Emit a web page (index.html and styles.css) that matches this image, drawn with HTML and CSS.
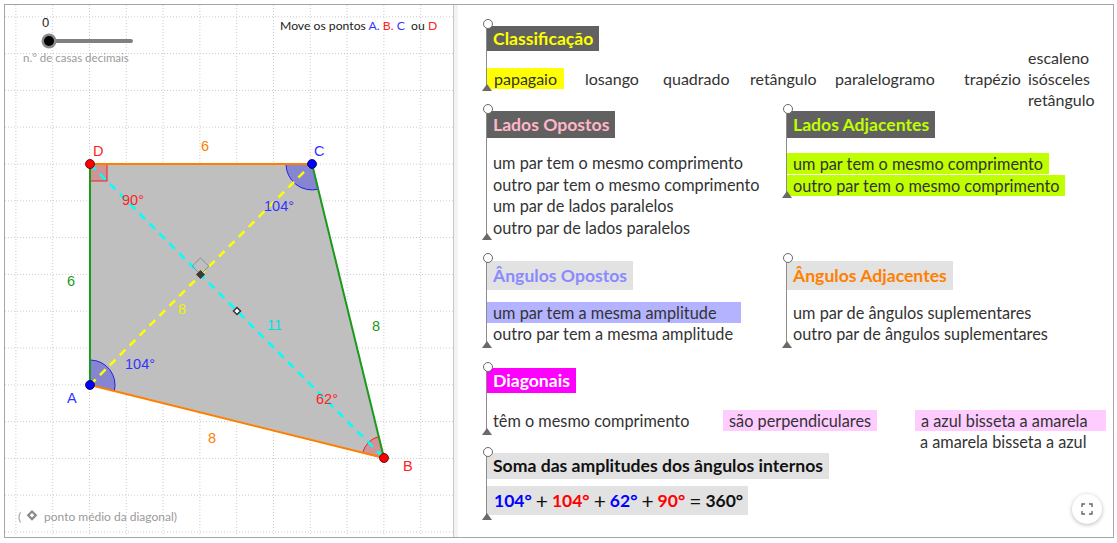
FILE: index.html
```html
<!DOCTYPE html>
<html lang="pt">
<head>
<meta charset="utf-8">
<title>Quadriláteros</title>
<link rel="stylesheet" href="styles.css">
</head>
<body>
<div class="app">
  <div class="graphics">
    <svg class="canvas" width="448" height="531" viewBox="5 5 448 531" xmlns="http://www.w3.org/2000/svg">
      <path class="grid" d="M15.9 5V536M52.7 5V536M89.5 5V536M126.3 5V536M163.1 5V536M199.9 5V536M236.7 5V536M273.5 5V536M310.3 5V536M347.1 5V536M383.9 5V536M420.7 5V536M5 16.8H453M5 53.6H453M5 90.4H453M5 127.2H453M5 164H453M5 200.8H453M5 237.6H453M5 274.4H453M5 311.2H453M5 348H453M5 384.8H453M5 421.6H453M5 458.4H453M5 495.2H453M5 532H453"/>

      <!-- slider -->
      <text class="slider-val" x="42" y="27">0</text>
      <line class="slider-track" x1="49" y1="41" x2="131" y2="41"/>
      <circle class="slider-halo" cx="49" cy="41" r="7.5"/>
      <circle class="slider-knob" cx="49" cy="41" r="5"/>
      <text class="hint hint-s" x="23" y="62">n.° de casas decimais</text>

      <text class="move" x="280" y="30" xml:space="preserve">Move os pontos <tspan class="c-blue">A.</tspan> <tspan class="c-red">B.</tspan> <tspan class="c-blue">C</tspan>  ou <tspan class="c-red">D</tspan></text>

      <!-- polygon -->
      <path class="poly" d="M90 164L312 164L384 458L90 385Z"/>

      <!-- angle marks -->
      <rect class="ang-red" x="90" y="164" width="17" height="17"/>
      <path class="ang-blue" d="M312 164L286 164A26 26 0 0 0 318.2 189.2Z"/>
      <path class="ang-blue" d="M90 385L90 360A25 25 0 0 1 114.3 391Z"/>
      <path class="ang-red" d="M384 458L362.7 452.7A22 22 0 0 1 378.8 436.6Z"/>

      <!-- sides -->
      <line class="side-orange" x1="90" y1="164" x2="312" y2="164"/>
      <line class="side-green" x1="312" y1="164" x2="384" y2="458"/>
      <line class="side-orange" x1="384" y1="458" x2="90" y2="385"/>
      <line class="side-green" x1="90" y1="385" x2="90" y2="164"/>

      <!-- diagonals -->
      <line class="diag-cyan" x1="90" y1="164" x2="384" y2="458"/>
      <line class="diag-yellow" x1="90" y1="385" x2="312" y2="164"/>

      <!-- markers -->
      <path class="right-mark" d="M200.5 274.5L192.2 266.2L200.5 257.9L208.8 266.2Z"/>
      <path class="inter" d="M200.5 270L205 274.5L200.5 279L196 274.5Z"/>
      <path class="mid" d="M237 307.5L240.5 311L237 314.5L233.5 311Z"/>

      <!-- points -->
      <circle class="pt-red" cx="90" cy="164" r="4.5"/>
      <circle class="pt-blue" cx="312" cy="164" r="4.5"/>
      <circle class="pt-red" cx="384" cy="458" r="4.5"/>
      <circle class="pt-blue" cx="90" cy="385" r="4.5"/>

      <!-- labels -->
      <text class="lbl c-red" x="93" y="156">D</text>
      <text class="lbl c-blue" x="314" y="156">C</text>
      <text class="lbl c-red" x="403" y="471">B</text>
      <text class="lbl c-blue" x="67" y="403">A</text>

      <text class="lbl c-orange" x="201" y="151">6</text>
      <text class="lbl c-green" x="67" y="286">6</text>
      <text class="lbl c-green" x="372" y="331">8</text>
      <text class="lbl c-orange" x="208" y="443">8</text>
      <text class="lbl c-yellow" x="178" y="314">8</text>
      <text class="lbl c-cyan" x="267" y="330">11</text>

      <text class="lbl c-red" x="122" y="205">90°</text>
      <text class="lbl c-blue" x="264" y="211">104°</text>
      <text class="lbl c-blue" x="125" y="369">104°</text>
      <text class="lbl c-red" x="316" y="404">62°</text>

      <text class="hint" x="18" y="521">(</text>
      <path class="hint-diamond" d="M32 511.5L35.8 515.3L32 519.1L28.2 515.3Z"/>
      <text class="hint" x="44" y="521">ponto médio da diagonal)</text>
    </svg>
  </div>
  <div class="divider"></div>
  <div class="panel">
    <section class="group g1">
      <div class="head dark t-yellow">Classificação</div>
      <div class="class-row">
        <span class="hl hl-yellow">papagaio</span>
        <span>losango</span>
        <span>quadrado</span>
        <span>retângulo</span>
        <span>paralelogramo</span>
        <span>trapézio</span>
        <span class="stack"><span>escaleno</span><span>isósceles</span><span>retângulo</span></span>
      </div>
    </section>

    <div class="pair pair1">
      <section class="group g2">
        <div class="head dark t-pink">Lados Opostos</div>
        <div class="lines">
          <div>um par tem o mesmo comprimento</div>
          <div>outro par tem o mesmo comprimento</div>
          <div>um par de lados paralelos</div>
          <div>outro par de lados paralelos</div>
        </div>
      </section>
      <section class="group g3">
        <div class="head dark t-lime">Lados Adjacentes</div>
        <div class="hl-lines">
          <div class="hl hl-lime">um par tem o mesmo comprimento</div>
          <div class="hl hl-lime">outro par tem o mesmo comprimento</div>
        </div>
      </section>
    </div>

    <div class="pair pair2">
      <section class="group g4">
        <div class="head light t-periwinkle">Ângulos Opostos</div>
        <div class="lines2">
          <div class="hl hl-peri wide">um par tem a mesma amplitude</div>
          <div class="plain">outro par tem a mesma amplitude</div>
        </div>
      </section>
      <section class="group g5">
        <div class="head light t-orange">Ângulos Adjacentes</div>
        <div class="lines2">
          <div class="plain">um par de ângulos suplementares</div>
          <div class="plain">outro par de ângulos suplementares</div>
        </div>
      </section>
    </div>

    <section class="group g6">
      <div class="head magenta">Diagonais</div>
      <div class="diag-row">
        <span class="plain">têm o mesmo comprimento</span>
        <span><span class="hl hl-pink">são perpendiculares</span></span>
        <span class="diag-stack">
          <span class="hl hl-pink wide-s">a azul bisseta a amarela</span>
          <span class="plain">a amarela bisseta a azul</span>
        </span>
      </div>
    </section>

    <section class="group g7">
      <div class="head light t-black">Soma das amplitudes dos ângulos internos</div>
      <div class="formula"><span class="c-blue">104°</span><span class="op">+</span><span class="c-red">104°</span><span class="op">+</span><span class="c-blue">62°</span><span class="op">+</span><span class="c-red">90°</span><span class="op">=</span><span>360°</span></div>
    </section>

    <button class="fullscreen" type="button" aria-label="Ecrã inteiro">
      <svg width="12" height="12" viewBox="0 0 12 12"><path d="M1 4V1H4M8 1H11V4M11 8V11H8M4 11H1V8" fill="none" stroke="#666" stroke-width="1.4"/></svg>
    </button>
  </div>
</div>
</body>
</html>
```

FILE: styles.css
```css
* { box-sizing: border-box; }

html, body {
  margin: 0;
  padding: 0;
  background: #ffffff;
}

body {
  font-family: "Lato", "Liberation Sans", sans-serif;
  color: #333333;
}

.app {
  margin: 4px 0 0 4px;
  width: 1110px;
  height: 534px;
  border: 1px solid #a6a6a6;
  display: flex;
  background: #ffffff;
}

.graphics {
  width: 448px;
  height: 532px;
  flex: none;
  overflow: hidden;
}

.canvas {
  display: block;
}

.divider {
  width: 5px;
  flex: none;
  border-left: 1px solid #c8c8c8;
  background: #f3f3f3;
}

.panel {
  position: relative;
  flex: 1;
  padding-left: 28px;
  padding-top: 19px;
}

/* ---------- graphics ---------- */
.grid {
  fill: none;
  stroke: #cccccc;
  stroke-width: 1;
  stroke-dasharray: 1 2;
}

.slider-val {
  font-family: "Liberation Sans", sans-serif;
  font-size: 13px;
  fill: #222;
}
.slider-track {
  stroke: #808080;
  stroke-width: 4;
  stroke-linecap: round;
}
.slider-halo { fill: #8a8a8a; }
.slider-knob { fill: #000; }

.hint {
  font-family: "Lato", "Liberation Sans", sans-serif;
  font-size: 12px;
  fill: #9a9a9a;
}
.hint-s { font-size: 11.5px; }
.hint-diamond {
  fill: none;
  stroke: #8a8a8a;
  stroke-width: 2.2;
}

.move {
  font-family: "Lato", "Liberation Sans", sans-serif;
  font-size: 12.2px;
  fill: #222;
}

.poly { fill: #bfbfbf; stroke: none; }

.ang-blue {
  fill: rgba(0, 0, 255, 0.3);
  stroke: #2020e0;
  stroke-width: 1;
}
.ang-red {
  fill: rgba(255, 0, 0, 0.22);
  stroke: #ee2020;
  stroke-width: 1;
}

.side-orange { stroke: #ff8000; stroke-width: 2; }
.side-green { stroke: #1a9a1a; stroke-width: 2; }

.diag-cyan {
  stroke: #00ffff;
  stroke-width: 2.5;
  stroke-dasharray: 8 6;
}
.diag-yellow {
  stroke: #ffff00;
  stroke-width: 2.5;
  stroke-dasharray: 8 6;
}

.right-mark { fill: none; stroke: #8c8c8c; stroke-width: 1; }
.inter { fill: #3a3a3a; }
.mid { fill: #ffffff; stroke: #333; stroke-width: 1.5; }

.pt-red { fill: #ff0000; stroke: #400000; stroke-width: 0.8; }
.pt-blue { fill: #0000ff; stroke: #000040; stroke-width: 0.8; }

.lbl {
  font-family: "Liberation Sans", sans-serif;
  font-size: 14.5px;
}

.c-red { fill: #ff2222; color: #ff0000; }
.c-blue { fill: #3333ff; color: #0000ff; }
.c-orange { fill: #ff8000; }
.c-green { fill: #1a9a1a; }
.c-yellow { fill: #f2f200; }
.c-cyan { fill: #00e0e0; }

/* ---------- panel groups ---------- */
.group {
  position: relative;
  border-left: 1px solid #8c8c8c;
}
.group::before {
  content: "";
  position: absolute;
  left: -4.5px;
  top: -5px;
  width: 8px;
  height: 8px;
  border: 1.6px solid #6a6a6a;
  border-radius: 50%;
  background: #ffffff;
}
.group::after {
  content: "";
  position: absolute;
  left: -5.5px;
  bottom: 0;
  width: 0;
  height: 0;
  border-left: 5px solid transparent;
  border-right: 5px solid transparent;
  border-bottom: 7px solid #6a6a6a;
}

.head {
  display: block;
  width: fit-content;
  font-weight: 700;
  font-size: 17.6px;
  padding: 0 6px;
  white-space: nowrap;
}
.dark { background: #616161; }
.light { background: #e2e2e2; }
.magenta { background: #ff00ff; color: #ffffff; }

.t-yellow { color: #ffff00; }
.t-pink { color: #ffb6c8; }
.t-lime { color: #bfff00; }
.t-periwinkle { color: #8a8aff; }
.t-orange { color: #ff8000; }
.t-black { color: #111111; }

.hl { display: inline-block; padding: 0 6px; }
.hl-yellow { background: #ffff00; }
.hl-lime { background: #bfff00; }
.hl-peri { background: #b3b3ff; }
.hl-pink { background: #ffccff; }
.wide { padding-right: 24px; }
.wide-s { padding-right: 18px; }

/* group 1 */
.g1 { padding-top: 2px; padding-bottom: 2px; }
.g1 .head { height: 25px; line-height: 25px; }
.class-row {
  margin-top: 17px;
  display: grid;
  grid-template-columns: 98px 78px 87px 85px 129px 64px auto;
  grid-template-rows: 21px;
  align-items: center;
  justify-items: start;
  font-size: 16px;
  line-height: 21px;
  color: #333;
  white-space: nowrap;
}
.class-row .hl { padding: 0 7px; }
.stack {
  display: flex;
  flex-direction: column;
  line-height: 21px;
}

/* pairs */
.pair {
  display: grid;
  grid-template-columns: 300px 1fr;
  align-items: start;
}
.pair1 { margin-top: 18px; }
.pair2 { margin-top: 18px; }

.g2, .g3 { padding-top: 2px; padding-bottom: 2px; }
.g2 .head, .g3 .head { height: 27px; line-height: 27px; }

.lines {
  margin-top: 14px;
  font-size: 16.3px;
  line-height: 21.5px;
  padding-left: 6px;
}

.hl-lines {
  margin-top: 15px;
  font-size: 16.3px;
  display: flex;
  flex-direction: column;
  align-items: flex-start;
  gap: 1px;
}
.hl-lines .hl { height: 21px; line-height: 21px; }

.g4, .g5 { padding-top: 3px; padding-bottom: 4px; }
.g4 .head, .g5 .head { height: 29px; line-height: 29px; }
.lines2 {
  margin-top: 12px;
  font-size: 16.3px;
  display: flex;
  flex-direction: column;
  align-items: flex-start;
}
.lines2 > div { height: 21px; line-height: 21px; }
.plain { padding: 0 6px; }

/* group 6 */
.g6 { margin-top: 19px; padding-top: 1px; padding-bottom: 4px; }
.g6 .head { height: 25px; line-height: 25px; }
.diag-row {
  margin-top: 17px;
  display: grid;
  grid-template-columns: 236px 192px auto;
  align-items: start;
  font-size: 16.3px;
  line-height: 21px;
  white-space: nowrap;
}
.diag-row > span { height: 21px; }
.diag-stack {
  display: flex;
  flex-direction: column;
  align-items: flex-start;
  margin-bottom: -21px;
}
.diag-stack .plain { padding-left: 5px; }

/* group 7 */
.g7 { margin-top: 17px; padding-top: 1px; padding-bottom: 5px; }
.g7 .head { height: 26px; line-height: 26px; }
.formula {
  margin-top: 7px;
  display: flex;
  width: fit-content;
  align-items: center;
  height: 29px;
  padding: 0 5px 0 7px;
  background: #e2e2e2;
  font-weight: 700;
  font-size: 17.5px;
  color: #111;
}
.formula .op { font-weight: 400; font-size: 21px; padding: 0 4px; line-height: 1; }

.fullscreen {
  position: absolute;
  right: 11px;
  bottom: 13px;
  width: 30px;
  height: 30px;
  border: none;
  border-radius: 50%;
  background: #ffffff;
  box-shadow: 0 1px 4px rgba(0, 0, 0, 0.28);
  display: flex;
  align-items: center;
  justify-content: center;
  padding: 0;
}
.fullscreen svg { display: block; }
```
